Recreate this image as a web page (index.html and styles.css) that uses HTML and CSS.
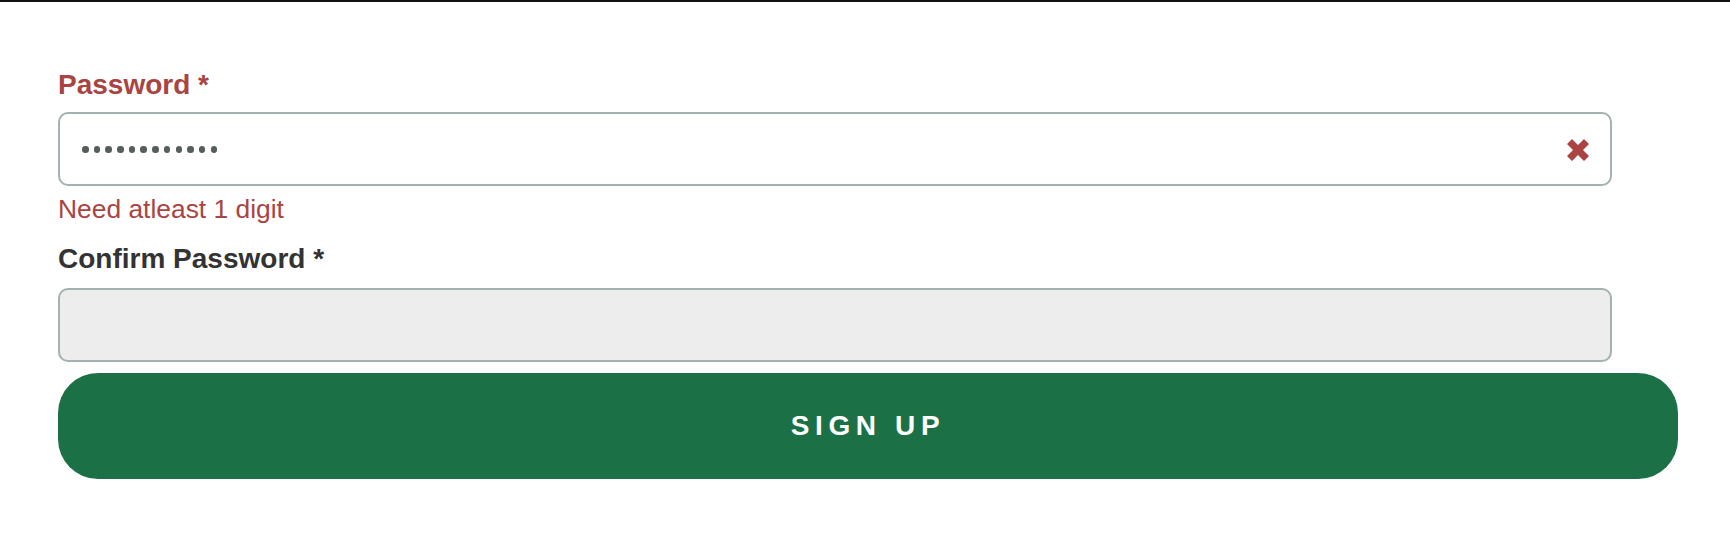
FILE: index.html
```html
<!DOCTYPE html>
<html lang="en">
<head>
<meta charset="utf-8">
<title>Sign up</title>
<link rel="stylesheet" href="styles.css">
</head>
<body>
<div class="topbar"></div>
<form class="signup">
  <div class="field has-error">
    <label class="label">Password *</label>
    <div class="input">
      <span class="dots" aria-label="password hidden">
        <span class="dot"></span><span class="dot"></span><span class="dot"></span><span class="dot"></span><span class="dot"></span><span class="dot"></span><span class="dot"></span><span class="dot"></span><span class="dot"></span><span class="dot"></span><span class="dot"></span><span class="dot"></span>
      </span>
      <svg class="icon-remove" viewBox="0 0 22 22" width="22" height="22" aria-hidden="true">
        <path d="M5 0 L11 6 L17 0 L22 5 L16 11 L22 17 L17 22 L11 16 L5 22 L0 17 L6 11 L0 5 Z" fill="currentColor"/>
      </svg>
    </div>
    <p class="help">Need atleast 1 digit</p>
  </div>
  <div class="field field-confirm">
    <label class="label">Confirm Password *</label>
    <div class="input input-disabled"></div>
  </div>
  <button type="button" class="btn">SIGN UP</button>
</form>
</body>
</html>
```

FILE: styles.css
```css
html, body {
  margin: 0;
  padding: 0;
  background: #ffffff;
}

body {
  font-family: "Liberation Sans", Arial, Helvetica, sans-serif;
  color: #333333;
}

.topbar {
  height: 2px;
  background: #111111;
}

.signup {
  margin: 67px 0 0 58px;
  width: 1620px;
  display: flex;
  flex-direction: column;
}

.field {
  display: flex;
  flex-direction: column;
}

.label {
  font-size: 28px;
  font-weight: bold;
  line-height: 32px;
  color: #333333;
}

.has-error .label {
  color: #a94442;
}

.input {
  box-sizing: border-box;
  width: 1554px;
  height: 74px;
  margin-top: 11px;
  border: 2px solid #a2b2b0;
  border-radius: 10px;
  background: #ffffff;
  display: flex;
  align-items: center;
  justify-content: space-between;
  padding: 0 21px 0 22px;
}

.dots {
  display: flex;
  gap: 5.2px;
  margin-top: 1px;
}

.dot {
  width: 6.5px;
  height: 6.5px;
  border-radius: 50%;
  background: #555e59;
}

.icon-remove {
  color: #a94442;
  display: block;
  margin-top: 1px;
}

.help {
  margin: 8px 0 0 0;
  font-size: 26.4px;
  line-height: 30px;
  color: #a94442;
}

.field-confirm {
  margin-top: 19px;
}

.field-confirm .input {
  margin-top: 13px;
}

.input-disabled {
  background: #ededed;
}

.btn {
  margin-top: 11px;
  height: 106px;
  width: 100%;
  border: none;
  border-radius: 40px;
  background: #1b7145;
  color: #ffffff;
  font-family: "Liberation Sans", Arial, Helvetica, sans-serif;
  font-size: 28px;
  font-weight: bold;
  letter-spacing: 0.2em;
  padding: 0;
  cursor: pointer;
}
```
